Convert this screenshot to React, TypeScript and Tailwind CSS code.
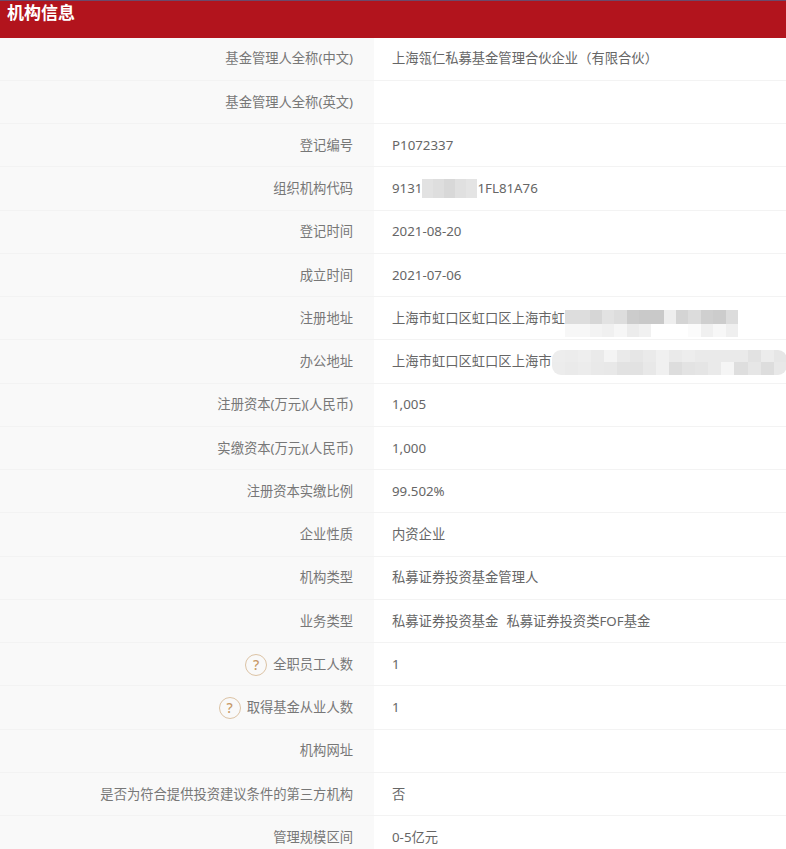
import React from 'react';

const FONT = "font-['Noto_Sans','Noto_Sans_CJK_SC',sans-serif]";

interface RowProps {
  label: string;
  value?: React.ReactNode;
  help?: boolean;
}

const HelpIcon: React.FC = () => (
  <span className="w-[22px] h-[22px] rounded-full border border-[#dcc3a5] text-[#c79a68] text-[14px] font-medium leading-[20px] text-center mr-[6px] shrink-0">
    ?
  </span>
);

const Row: React.FC<RowProps> = ({ label, value, help }) => (
  <div className="flex h-[43.25px] border-b border-[#f3f3f3]">
    <div className="w-[374px] shrink-0 bg-[#f9f9f9] flex items-center justify-end pr-[21px] pt-[1.5px] text-[#777777] text-[13.3px]">
      {help && <HelpIcon />}
      <span>{label}</span>
    </div>
    <div className="flex-1 min-w-0 flex items-center pl-[18px] pt-[1.5px] text-[#666666] text-[13.3px] whitespace-nowrap">{value}</div>
  </div>
);

// pixelated patch that hides part of a value, one array per mosaic row
const Mosaic: React.FC<{ grid: string[][]; className: string }> = ({ grid, className }) => (
  <span className={`flex flex-col shrink-0 overflow-hidden blur-[0.6px] ${className}`}>
    {grid.map((cells, r) => (
      <span key={r} className="flex flex-1">
        {cells.map((c, i) => (
          <span key={i} className="flex-1" style={{ backgroundColor: c }} />
        ))}
      </span>
    ))}
  </span>
);

const rows: RowProps[] = [
  { label: '基金管理人全称(中文)', value: '上海瓴仁私募基金管理合伙企业\uFF08有限合伙\uFF09' },
  { label: '基金管理人全称(英文)' },
  { label: '登记编号', value: 'P1072337' },
  {
    label: '组织机构代码',
    value: (
      <>
        9131
        <Mosaic
          className="w-[55px] h-[19px] -translate-y-[1px]"
          grid={[['#e2e2e2', '#dedede', '#d8d8d8', '#e0e0e0', '#e4e4e4']]}
        />
        1FL81A76
      </>
    ),
  },
  { label: '登记时间', value: '2021-08-20' },
  { label: '成立时间', value: '2021-07-06' },
  {
    label: '注册地址',
    value: (
      <>
        上海市虹口区虹口区上海市虹
        <Mosaic
          className="w-[173px] h-[27px] translate-y-[5px]"
          grid={[
            ['#dddddd', '#dddddd', '#d6d6d6', '#e2e2e2', '#dddddd', '#cccccc', '#c9c9c9', '#c9c9c9', '#eeeeee', '#d4d4d4', '#dcdcdc', '#cfcfcf', '#cccccc', '#dcdcdc'],
            ['#f7f7f7', '#f7f7f7', '#f3f3f3', '#f0f0f0', '#f6f6f6', '#ececec', '#f1f1f1', '#ffffff', '#ffffff', '#ffffff', '#fbfbfb', '#f0f0f0', '#f7f7f7', '#efefef'],
          ]}
        />
      </>
    ),
  },
  {
    label: '办公地址',
    value: (
      <>
        上海市虹口区虹口区上海市
        <Mosaic
          className="w-[235px] h-[25px] rounded-[9px]"
          grid={[
            ['#ededed', '#ececec', '#eeeeee', '#eaeaea', '#f4f4f4', '#eaeaea', '#e6e6e6', '#eaeaea', '#f0f0f0', '#eaeaea', '#ededed', '#eaeaea', '#eaeaea', '#eaeaea', '#eaeaea', '#e2e2e2', '#ececec', '#e6e6e6'],
            ['#ececec', '#eaeaea', '#ececec', '#e9e9e9', '#e8e8e8', '#e2e2e2', '#e2e2e2', '#e8e8e8', '#f0f0f0', '#dddddd', '#e3e3e3', '#e5e5e5', '#eaeaea', '#f5f5f5', '#dedede', '#e6e6e6', '#dddddd', '#e8e8e8'],
          ]}
        />
      </>
    ),
  },
  { label: '注册资本(万元)(人民币)', value: '1,005' },
  { label: '实缴资本(万元)(人民币)', value: '1,000' },
  { label: '注册资本实缴比例', value: '99.502%' },
  { label: '企业性质', value: '内资企业' },
  { label: '机构类型', value: '私募证券投资基金管理人' },
  {
    label: '业务类型',
    value: (
      <>
        <span className="mr-[8px]">私募证券投资基金</span>
        <span>私募证券投资类FOF基金</span>
      </>
    ),
  },
  { label: '全职员工人数', value: '1', help: true },
  { label: '取得基金从业人数', value: '1', help: true },
  { label: '机构网址' },
  { label: '是否为符合提供投资建议条件的第三方机构', value: '否' },
  { label: '管理规模区间', value: '0-5亿元' },
];

export default function App() {
  return (
    <div className={`${FONT} w-[786px] h-[849px] overflow-hidden bg-white`}>
      <div className="h-[37.5px] bg-[#b2141d] border-t border-[#6b4a6b] pl-[7px] text-white text-[17px] font-bold leading-[24px]">
        机构信息
      </div>
      {rows.map((r) => (
        <Row key={r.label} {...r} />
      ))}
    </div>
  );
}
